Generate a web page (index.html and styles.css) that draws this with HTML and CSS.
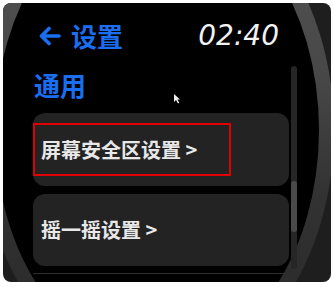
FILE: index.html
```html
<!DOCTYPE html>
<html lang="zh-CN">
<head>
  <meta charset="UTF-8" />
  <meta name="viewport" content="width=device-width, initial-scale=1.0" />
  <title>设置</title>
  <link rel="stylesheet" href="styles.css">
</head>
<body>
  <div class="frame">
    <svg class="bezel" width="328" height="279" viewBox="0 0 328 279">
      <defs>
        <linearGradient id="ring" x1="0" y1="0" x2="0" y2="1">
          <stop offset="0" stop-color="#575757" />
          <stop offset="0.4" stop-color="#474747" />
          <stop offset="0.62" stop-color="#333333" />
          <stop offset="1" stop-color="#262626" />
        </linearGradient>
      </defs>
      <ellipse cx="154" cy="127" rx="177" ry="245" fill="url(#ring)" />
      <ellipse cx="154" cy="127" rx="162" ry="230" fill="#000" />
    </svg>

    <div class="screen">
      <div class="topbar">
        <div class="title">
          <svg class="back" width="22" height="20" viewBox="0 0 22 20">
            <path d="M20 10H3M10 2.5L2.5 10L10 17.5" fill="none" stroke="#1a6ef0" stroke-width="3.6" stroke-linecap="round" stroke-linejoin="round" />
          </svg>
          <span>设置</span>
        </div>
        <div class="clock">02:40</div>
      </div>

      <div class="body">
        <div class="list">
          <div class="section-title">通用</div>
          <div class="card">
            <div class="label marked">屏幕安全区设置 &gt;</div>
          </div>
          <div class="card">
            <div class="label">摇一摇设置 &gt;</div>
          </div>
          <div class="card next"></div>
        </div>
        <div class="scrollbar">
          <div class="thumb"></div>
        </div>
      </div>
    </div>

    <svg class="cursor" width="8" height="11" viewBox="0 0 8 11">
      <path d="M1 1V9L3 7L5 10.5L6.3 9.8L4.4 6.5H7Z" fill="#eeeeee" />
    </svg>
  </div>
</body>
</html>
```

FILE: styles.css
```css
body {
  margin: 0;
  background: #ffffff;
  font-family: "Noto Sans CJK SC", "Noto Sans", sans-serif;
}
.frame {
  position: relative;
  width: 328px;
  height: 279px;
  margin: 3px;
  background: #1e1e1e;
  border-radius: 8px;
  overflow: hidden;
}
.bezel {
  position: absolute;
  left: 0;
  top: 0;
}
.screen {
  position: relative;
  padding: 18px 0 0 30px;
}
.topbar {
  width: 246px;
  height: 30px;
  padding-left: 6px;
  box-sizing: border-box;
  display: flex;
  justify-content: space-between;
  align-items: center;
}
.title {
  display: flex;
  align-items: center;
  gap: 10px;
  color: #1a6ef0;
  font-size: 26px;
  font-weight: bold;
  line-height: 30px;
}
.back {
  display: block;
}
.clock {
  color: #f2f2f2;
  font-family: "DejaVu Sans", sans-serif;
  font-style: italic;
  font-size: 28px;
  line-height: 30px;
}
.body {
  display: flex;
  gap: 2px;
  margin-top: 14px;
}
.list {
  width: 256px;
}
.section-title {
  margin-top: 5px;
  padding-left: 1px;
  height: 30px;
  line-height: 30px;
  color: #1a6ef0;
  font-size: 26px;
  font-weight: bold;
}
.card {
  margin-top: 13px;
  height: 73px;
  background: #232323;
  border-radius: 12px;
  display: flex;
  align-items: center;
}
.card + .card {
  margin-top: 8px;
  height: 72px;
}
.card.next {
  margin-top: 7px;
  height: 20px;
  background: transparent;
  border-top: 1px solid #2e2e2e;
  border-radius: 0;
}
.label {
  padding-left: 8px;
  color: #e8e8e8;
  font-size: 20px;
  font-weight: bold;
  line-height: 24px;
}
.label.marked {
  width: 198px;
  height: 53px;
  box-sizing: border-box;
  border: 2px solid #e00000;
  padding-left: 6px;
  display: flex;
  align-items: center;
}
.scrollbar {
  width: 6px;
  height: 203px;
  margin-top: 1px;
  background: #262626;
  border-radius: 3px;
}
.thumb {
  height: 51px;
  margin-top: 115px;
  background: #4a4a4a;
  border-radius: 3px;
}
.cursor {
  position: absolute;
  left: 170px;
  top: 90px;
}
```
